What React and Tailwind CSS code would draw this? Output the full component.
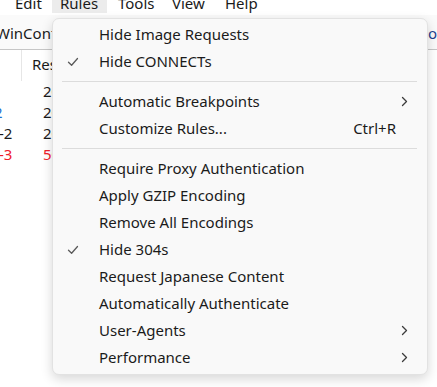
import React from "react";

const Check = () => (
  <svg width="12" height="10" viewBox="0 0 12 10" className="block">
    <path d="M1.5 5.2 L4.6 8.2 L10.5 1.5" fill="none" stroke="#5a5a5a" strokeWidth="1.3" strokeLinecap="round" strokeLinejoin="round" />
  </svg>
);

const Chevron = () => (
  <svg width="7" height="11" viewBox="0 0 7 11" className="block">
    <path d="M1.5 1.5 L5.5 5.5 L1.5 9.5" fill="none" stroke="#3c3c3c" strokeWidth="1.3" strokeLinecap="round" strokeLinejoin="round" />
  </svg>
);

function Item({ label, checked, shortcut, sub }) {
  return (
    <div className="h-[27px] flex items-center relative">
      <div className="w-[46px] flex justify-start pl-[14px]">{checked ? <Check /> : null}</div>
      <div className="flex-1 text-[15px] text-[#1b1b1b] whitespace-nowrap">{label}</div>
      {shortcut ? <div className="text-[15px] text-[#1b1b1b] pr-[31px]">{shortcut}</div> : null}
      {sub ? <div className="pr-[19px]"><Chevron /></div> : null}
    </div>
  );
}

const Sep = () => (
  <div className="h-[13px] flex items-center pl-[9px] pr-[10px]">
    <div className="h-px w-full bg-[#dcdcdc]" />
  </div>
);

export default function App() {
  return (
    <div className="relative w-[437px] h-[387px] overflow-hidden bg-white font-['Noto_Sans',sans-serif] text-[15px] text-[#1a1a1a]">
      {/* menubar */}
      <div className="h-[15px] overflow-hidden bg-white">
        <div className="flex h-[20px] -mt-[7px] leading-[20px] pl-[7px] whitespace-nowrap">
          <div className="w-[45px] pl-[8px]">Edit</div>
          <div className="w-[55px] pl-[8px] bg-[#ececec]">Rules</div>
          <div className="w-[57px] pl-[11px]">Tools</div>
          <div className="w-[53px] pl-[8px]">View</div>
          <div className="pl-[8px]">Help</div>
        </div>
      </div>
      {/* toolbar */}
      <div className="h-[35px] border-b border-[#c6c6c6] bg-[#fafafa] flex items-center justify-between">
        <div className="-ml-[4px] pt-[2px] whitespace-nowrap">WinConfig</div>
        <div className="pt-[2px] text-[#1d3f8f] whitespace-nowrap">Go</div>
      </div>
      {/* list header */}
      <div className="h-[31px] flex">
        <div className="w-[22px] border-r border-[#e6e6e6]" />
        <div className="pl-[10px] pt-[4px] leading-[20px]">Result</div>
      </div>
      {/* rows */}
      <div className="flex flex-col">
        {[
          { a: "1", b: "200", ca: "text-[#1f6fd1]", cb: "text-[#1a1a1a]", off: "-ml-[7px]", w: "w-[50px]" },
          { a: "2", b: "200", ca: "text-[#1f6fd1]", cb: "text-[#1a1a1a]", off: "-ml-[6px]", w: "w-[49px]" },
          { a: "-2", b: "200", ca: "text-[#1a1a1a]", cb: "text-[#1a1a1a]", off: "-ml-[1px]", w: "w-[44px]" },
          { a: "-3", b: "502", ca: "text-[#f0202a]", cb: "text-[#f0202a]", off: "-ml-[1px]", w: "w-[44px]" },
        ].map((r, i) => (
          <div key={i} className="h-[21px] flex items-center">
            <div className={`${r.w} ${r.off} ${r.ca}`}>{r.a}</div>
            <div className={r.cb}>{r.b}</div>
          </div>
        ))}
      </div>

      {/* dropdown menu */}
      <div className="absolute left-[52px] top-[18px] w-[376px] h-[357px] rounded-[7px] bg-[#f9f9f9] border border-[#e2e2e2] shadow-[0_4px_12px_rgba(0,0,0,0.16)] pt-[2px] pb-[3px]">
        <Item label="Hide Image Requests" />
        <Item label="Hide CONNECTs" checked />
        <Sep />
        <Item label="Automatic Breakpoints" sub />
        <Item label="Customize Rules..." shortcut="Ctrl+R" />
        <Sep />
        <Item label="Require Proxy Authentication" />
        <Item label="Apply GZIP Encoding" />
        <Item label="Remove All Encodings" />
        <Item label="Hide 304s" checked />
        <Item label="Request Japanese Content" />
        <Item label="Automatically Authenticate" />
        <Item label="User-Agents" sub />
        <Item label="Performance" sub />
      </div>
    </div>
  );
}
